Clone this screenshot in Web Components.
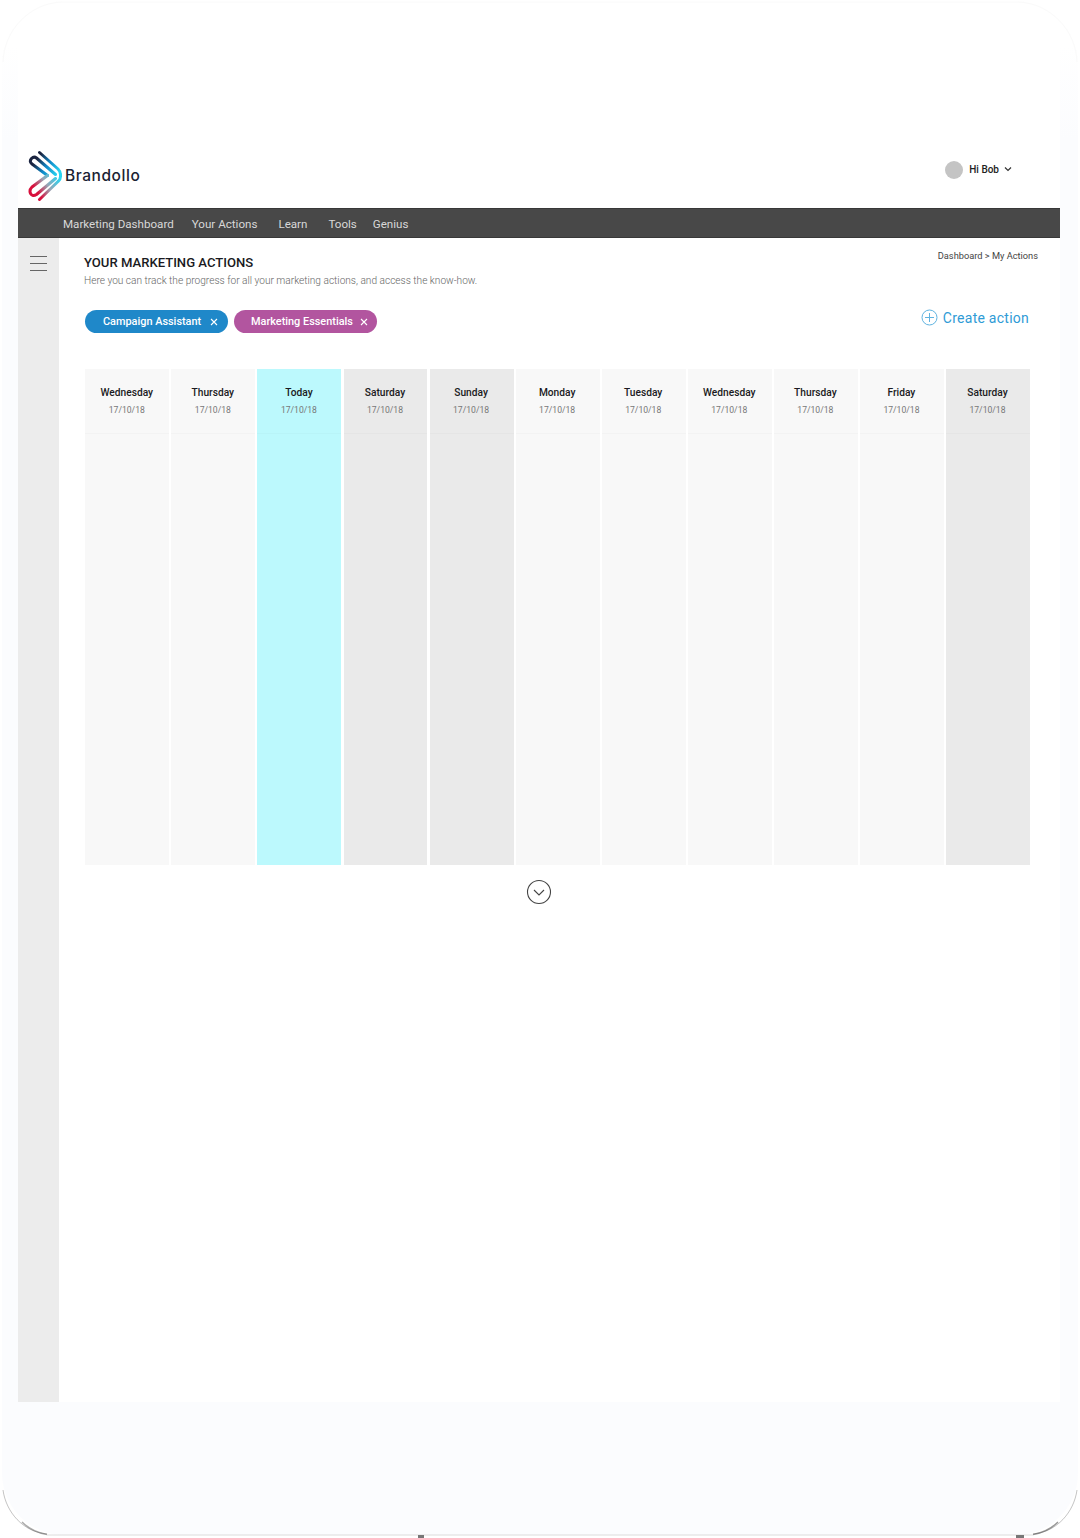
<!DOCTYPE html>
<html lang="en">
<head>
<meta charset="utf-8">
<title>Brandollo - Your Marketing Actions</title>
<style>
  html, body { margin: 0; background: #fff; }
  body { font-family: Roboto, "Liberation Sans", sans-serif; }
</style>
</head>
<body>
<device-frame>
  <app-header></app-header>
  <main-nav>
    <nav-link>Marketing Dashboard</nav-link>
    <nav-link style="margin-left:18px">Your Actions</nav-link>
    <nav-link style="margin-left:21px">Learn</nav-link>
    <nav-link style="margin-left:21px">Tools</nav-link>
    <nav-link style="margin-left:16px">Genius</nav-link>
  </main-nav>
  <page-body>
    <page-intro></page-intro>
    <filter-row>
      <filter-chip color="#1f88c9">Campaign Assistant</filter-chip>
      <filter-chip color="#b2559f" tight>Marketing Essentials</filter-chip>
    </filter-row>
    <day-grid>
      <day-col day="Wednesday"></day-col>
      <day-col day="Thursday"></day-col>
      <day-col day="Today" kind="today"></day-col>
      <day-col day="Saturday" kind="weekend"></day-col>
      <day-col day="Sunday" kind="weekend"></day-col>
      <day-col day="Monday"></day-col>
      <day-col day="Tuesday"></day-col>
      <day-col day="Wednesday"></day-col>
      <day-col day="Thursday"></day-col>
      <day-col day="Friday"></day-col>
      <day-col day="Saturday" kind="weekend"></day-col>
    </day-grid>
    <more-button></more-button>
  </page-body>
</device-frame>

<script>
function shadow(el, html) {
  el.attachShadow({ mode: "open" }).innerHTML = html;
}

class DeviceFrame extends HTMLElement {
  connectedCallback() {
    shadow(this, `
      <style>
      :host { display: block; position: relative; width: 1080px; height: 1538px; overflow: hidden; }
      .shell {
        box-sizing: border-box;
        width: 1076px; height: 1535px; margin-left: 2px;
        padding: 0 18px 0 16px;
        background: linear-gradient(#fff, #fff 45px, #fbfcfe 140px);
        border-radius: 62px;
      }
      .screen { background: #fff; height: 1402px; padding-top: 130px; box-sizing: border-box; display: flex; flex-direction: column; }
      svg { position: absolute; left: 0; top: 0; pointer-events: none; }
      </style>
      <div class="shell"><div class="screen"><slot></slot></div></div>
      <svg width="1080" height="1538" viewBox="0 0 1080 1538" fill="none">
        <path d="M3 62C4 30 30 3 62 2H1018C1050 3 1076 30 1077 62" stroke="#fafafa" stroke-width="1"/>
        <path d="M3 1490c3 22 20 42 44 44" stroke="#555" stroke-width="1" opacity=".35"/>
        <path d="M1077 1490c-3 22-20 42-44 44" stroke="#555" stroke-width="1" opacity=".35"/>
        <path d="M22 1522Q32 1532 47 1534.500" stroke="#444" stroke-width="1.500" opacity=".45"/>
        <path d="M1058 1522Q1048 1532 1033 1534.500" stroke="#444" stroke-width="1.500" opacity=".55"/>
        <path d="M47 1535H1033" stroke="#dcdcdc" stroke-width="1"/>
        <rect x="418" y="1535" width="6" height="3" fill="#777"/>
        <rect x="1016" y="1535" width="8" height="3" fill="#777"/>
      </svg>`);
  }
}

class AppHeader extends HTMLElement {
  connectedCallback() {
    shadow(this, `
      <style>
      :host { display: flex; justify-content: space-between; height: 78px; box-sizing: border-box; padding: 20px 48px 0 10px; }
      .brand { display: flex; align-items: flex-start; }
      .name { font: 500 15.5px Inter, sans-serif; color: #1a2233; letter-spacing: .55px; margin: 16px 0 0 1px; }
      .user { display: flex; align-items: center; height: 20px; margin-top: 10px; font-size: 10px; font-weight: 500; color: #222; }
      .user span.txt { position: relative; top: -1px; }
      .avatar { width: 18px; height: 18px; border-radius: 50%; background: #c4c4c4; margin-right: 6px; }
      .caret { margin-left: 5px; position: relative; top: -1px; }
      </style>
      <div class="brand">
        <svg width="36" height="54" viewBox="27.500 149.500 36 54" fill="none" stroke-width="3" stroke-linecap="round" stroke-linejoin="round">
          <defs>
            <linearGradient id="up" gradientUnits="userSpaceOnUse" x1="33" y1="152" x2="60" y2="172">
              <stop offset=".2" stop-color="#1b2440"/><stop offset=".55" stop-color="#0f86c6"/><stop offset=".95" stop-color="#28d3f0"/>
            </linearGradient>
            <linearGradient id="down" gradientUnits="userSpaceOnUse" x1="58" y1="177" x2="33" y2="194">
              <stop offset="0" stop-color="#28d3f0"/><stop offset=".45" stop-color="#9aa4b4"/><stop offset=".85" stop-color="#d80f3c"/>
            </linearGradient>
          </defs>
          <path stroke="url(#up)" d="M39 152L57.500 168.500Q60 171 60 174M55 174L36 157.500Q33.500 155.500 31 158Q28.500 161 31.500 163.500L47 175"/>
          <path stroke="url(#down)" d="M60 174V176Q60 179 57.500 181L39 199M47 175L31.500 186.500Q28.500 189.500 30 193Q32 196.500 36 194L55 178"/>
        </svg>
        <span class="name">Brandollo</span>
      </div>
      <div class="user">
        <span class="avatar"></span><span class="txt">Hi Bob</span>
        <svg class="caret" width="8" height="6" viewBox="0 0 8 6" fill="none" stroke="#333" stroke-width="1.200"><path d="M1 1.500L4 4.500L7 1.500"/></svg>
      </div>`);
  }
}

class MainNav extends HTMLElement {
  connectedCallback() {
    shadow(this, `
      <style>
      :host { display: flex; align-items: center; height: 30px; box-sizing: border-box; padding: 2px 0 0 45px; background: #484848; border-top: 1px solid #383838; border-bottom: 1px solid #383838; }
      </style>
      <slot></slot>`);
  }
}

class NavLink extends HTMLElement {
  connectedCallback() {
    shadow(this, `
      <style>
      :host { display: block; font-size: 11.600px; color: #d8d8d8; }
      </style>
      <slot></slot>`);
  }
}

class PageBody extends HTMLElement {
  connectedCallback() {
    shadow(this, `
      <style>
      :host { display: flex; flex: 1; }
      .rail { width: 40.500px; background: #ececec; padding: 18px 0 0 11.500px; box-sizing: border-box; }
      .bar { width: 17.500px; height: 1.200px; background: #666; margin-bottom: 5.800px; }
      .content { flex: 1; padding: 0 30px 0 25.500px; }
      </style>
      <div class="rail"><div class="bar"></div><div class="bar"></div><div class="bar"></div></div>
      <div class="content"><slot></slot></div>`);
  }
}

class PageIntro extends HTMLElement {
  connectedCallback() {
    shadow(this, `
      <style>
      :host { display: block; position: relative; padding-top: 17px; }
      h1 { margin: 0; font-size: 13.100px; line-height: 15px; font-weight: 500; color: #1a1a22; }
      p { margin: 4px 0 0; font-size: 10.150px; line-height: 14px; font-weight: 300; color: #666; }
      .crumb { position: absolute; right: -8px; top: 12px; font-size: 9.250px; line-height: 12px; color: #444; }
      </style>
      <h1>YOUR MARKETING ACTIONS</h1>
      <p>Here you can track the progress for all your marketing actions, and access the know-how.</p>
      <span class="crumb">Dashboard &gt; My Actions</span>`);
  }
}

class FilterRow extends HTMLElement {
  connectedCallback() {
    shadow(this, `
      <style>
      :host { display: flex; align-items: flex-start; height: 59px; padding: 22px 0 0 1px; }
      .chips { display: flex; gap: 6px; flex: 1; }
      .create { display: flex; align-items: center; margin: -1px 1px 0 0; font-size: 14px; color: #2f9bd6; letter-spacing: .25px; }
      .create svg { margin-right: 5px; }
      </style>
      <div class="chips"><slot></slot></div>
      <div class="create">
        <svg width="17" height="17" viewBox="0 0 17 17" fill="none" stroke="#5fb3e0" stroke-width="1"><circle cx="8.500" cy="8.500" r="7.500"/><path d="M8.500 4V13M4 8.500H13"/></svg>
        Create action
      </div>`);
  }
}

class FilterChip extends HTMLElement {
  connectedCallback() {
    const tight = this.hasAttribute("tight");
    shadow(this, `
      <style>
      :host { display: flex; align-items: center; width: 143px; height: 23px; box-sizing: border-box; border-radius: 12px; padding-left: ${tight ? 17 : 18}px; color: #fff; font-size: 10.900px; font-weight: 500; background: ${this.getAttribute("color")}; }
      svg { margin-left: ${tight ? 7 : 9}px; }
      </style>
      <slot></slot>
      <svg width="8" height="8" viewBox="0 0 8 8" stroke="#fff" stroke-width="1.100"><path d="M1 1L7 7M7 1L1 7"/></svg>`);
  }
}

class DayGrid extends HTMLElement {
  connectedCallback() {
    shadow(this, `
      <style>
      :host { display: grid; grid-template-columns: repeat(11, 1fr); column-gap: 2.100px; height: 496px; margin-left: 1.300px; }
      </style>
      <slot></slot>`);
  }
}

class DayCol extends HTMLElement {
  connectedCallback() {
    const bg = { today: "#bcf9fd", weekend: "#eaeaea" }[this.getAttribute("kind")] || "#f8f8f8";
    shadow(this, `
      <style>
      :host { display: block; background: ${bg}; text-align: center; }
      .head { height: 65px; box-sizing: border-box; padding: 17px 1px 0 0; border-bottom: 1px solid rgba(0,0,0,.02); }
      .day { font-size: 10.200px; line-height: 13px; font-weight: 500; color: #1a1a22; }
      .date { font-size: 8.600px; line-height: 12px; margin-top: 5px; color: #777; }
      </style>
      <div class="head">
        <div class="day">${this.getAttribute("day")}</div>
        <div class="date">17/10/18</div>
      </div>`);
  }
}

class MoreButton extends HTMLElement {
  connectedCallback() {
    shadow(this, `
      <style>
      :host { display: flex; justify-content: center; padding: 14px 37px 0 0; }
      </style>
      <svg width="26" height="26" viewBox="0 0 26 26" fill="none" stroke="#444" stroke-width="1.100"><circle cx="13" cy="13" r="11.500"/><path d="M8 11L13 16L18 11"/></svg>`);
  }
}

customElements.define("device-frame", DeviceFrame);
customElements.define("app-header", AppHeader);
customElements.define("main-nav", MainNav);
customElements.define("nav-link", NavLink);
customElements.define("page-body", PageBody);
customElements.define("page-intro", PageIntro);
customElements.define("filter-row", FilterRow);
customElements.define("filter-chip", FilterChip);
customElements.define("day-grid", DayGrid);
customElements.define("day-col", DayCol);
customElements.define("more-button", MoreButton);
</script>
</body>
</html>
